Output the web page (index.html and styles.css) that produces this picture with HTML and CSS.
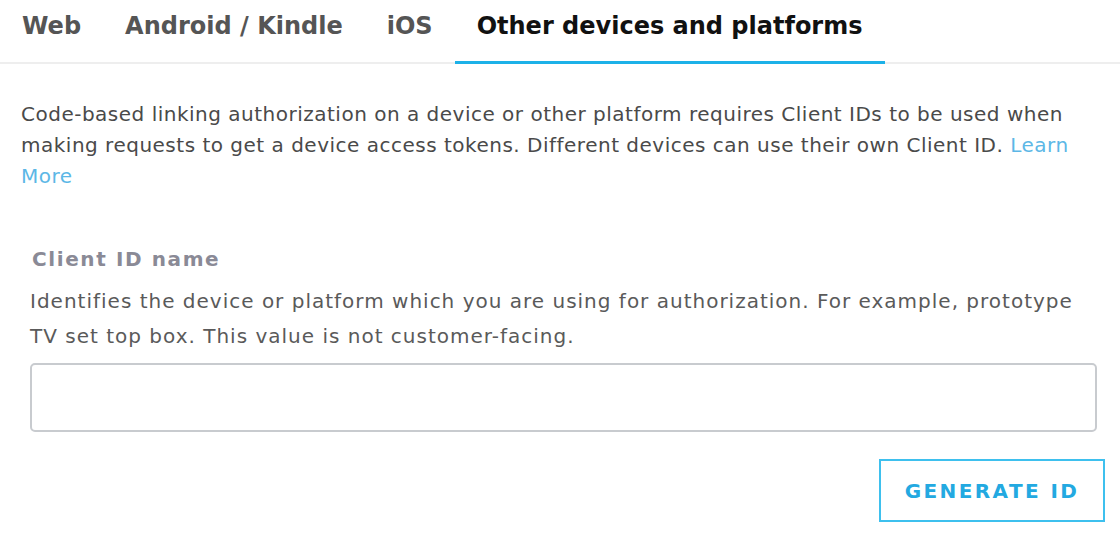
FILE: index.html
```html
<!DOCTYPE html>
<html lang="en">
<head>
  <meta charset="UTF-8">
  <title>Security Profile - Client IDs</title>
  <link rel="stylesheet" href="styles.css">
</head>
<body>
  <div class="tabs">
    <a class="tab" href="#">Web</a>
    <a class="tab" href="#">Android / Kindle</a>
    <a class="tab" href="#">iOS</a>
    <a class="tab active" href="#">Other devices and platforms</a>
  </div>

  <p class="intro">
    Code-based linking authorization on a device or other platform requires Client IDs to be used when
    making requests to get a device access tokens. Different devices can use their own Client ID.
    <a href="#">Learn More</a>
  </p>

  <form class="client-form">
    <label class="field-label" for="clientName">Client ID name</label>
    <p class="field-help">
      Identifies the device or platform which you are using for authorization. For example, prototype
      TV set top box. This value is not customer-facing.
    </p>
    <input type="text" id="clientName" class="field-input">
    <div class="actions">
      <button type="button" class="btn-outline">Generate ID</button>
    </div>
  </form>
</body>
</html>
```
FILE: styles.css
```css
body {
  margin: 0;
  font-family: "DejaVu Sans", sans-serif;
  background-color: #fff;
  color: #333;
}

.tabs {
  display: flex;
  height: 62px;
  border-bottom: 2px solid #eeeeee;
}

.tab {
  padding: 12px 22px 0;
  font-size: 24px;
  font-weight: bold;
  color: #555;
  text-decoration: none;
  border-bottom: 3px solid transparent;
  margin-bottom: -2px;
}

.tab.active {
  color: #111;
  border-bottom-color: #1cb1e8;
}

.intro {
  margin: 35px 21px 0;
  font-size: 20px;
  line-height: 31px;
  letter-spacing: 0.5px;
  color: #4a4a4a;
}

.intro a {
  color: #5cb7e6;
  text-decoration: none;
}

.client-form {
  margin: 55px 15px 0 30px;
}

.field-label {
  display: block;
  margin-left: 2px;
  font-size: 20px;
  font-weight: bold;
  letter-spacing: 1.6px;
  color: #8a8a96;
}

.field-help {
  max-width: 1067px;
  margin: 13px 0 0;
  font-size: 20px;
  line-height: 35px;
  letter-spacing: 1px;
  color: #5a5a5a;
}

.field-input {
  display: block;
  box-sizing: border-box;
  width: 1067px;
  height: 69px;
  margin-top: 9px;
  border: 2px solid #c8cbcf;
  border-radius: 5px;
  font-size: 20px;
}

.actions {
  display: flex;
  justify-content: flex-end;
  margin-top: 27px;
}

.btn-outline {
  width: 226px;
  height: 63px;
  border: 2px solid #3ec0ee;
  background-color: #fff;
  color: #23a9e1;
  font-family: "DejaVu Sans", sans-serif;
  font-size: 20px;
  font-weight: bold;
  letter-spacing: 2.4px;
  text-transform: uppercase;
  cursor: pointer;
}
```
